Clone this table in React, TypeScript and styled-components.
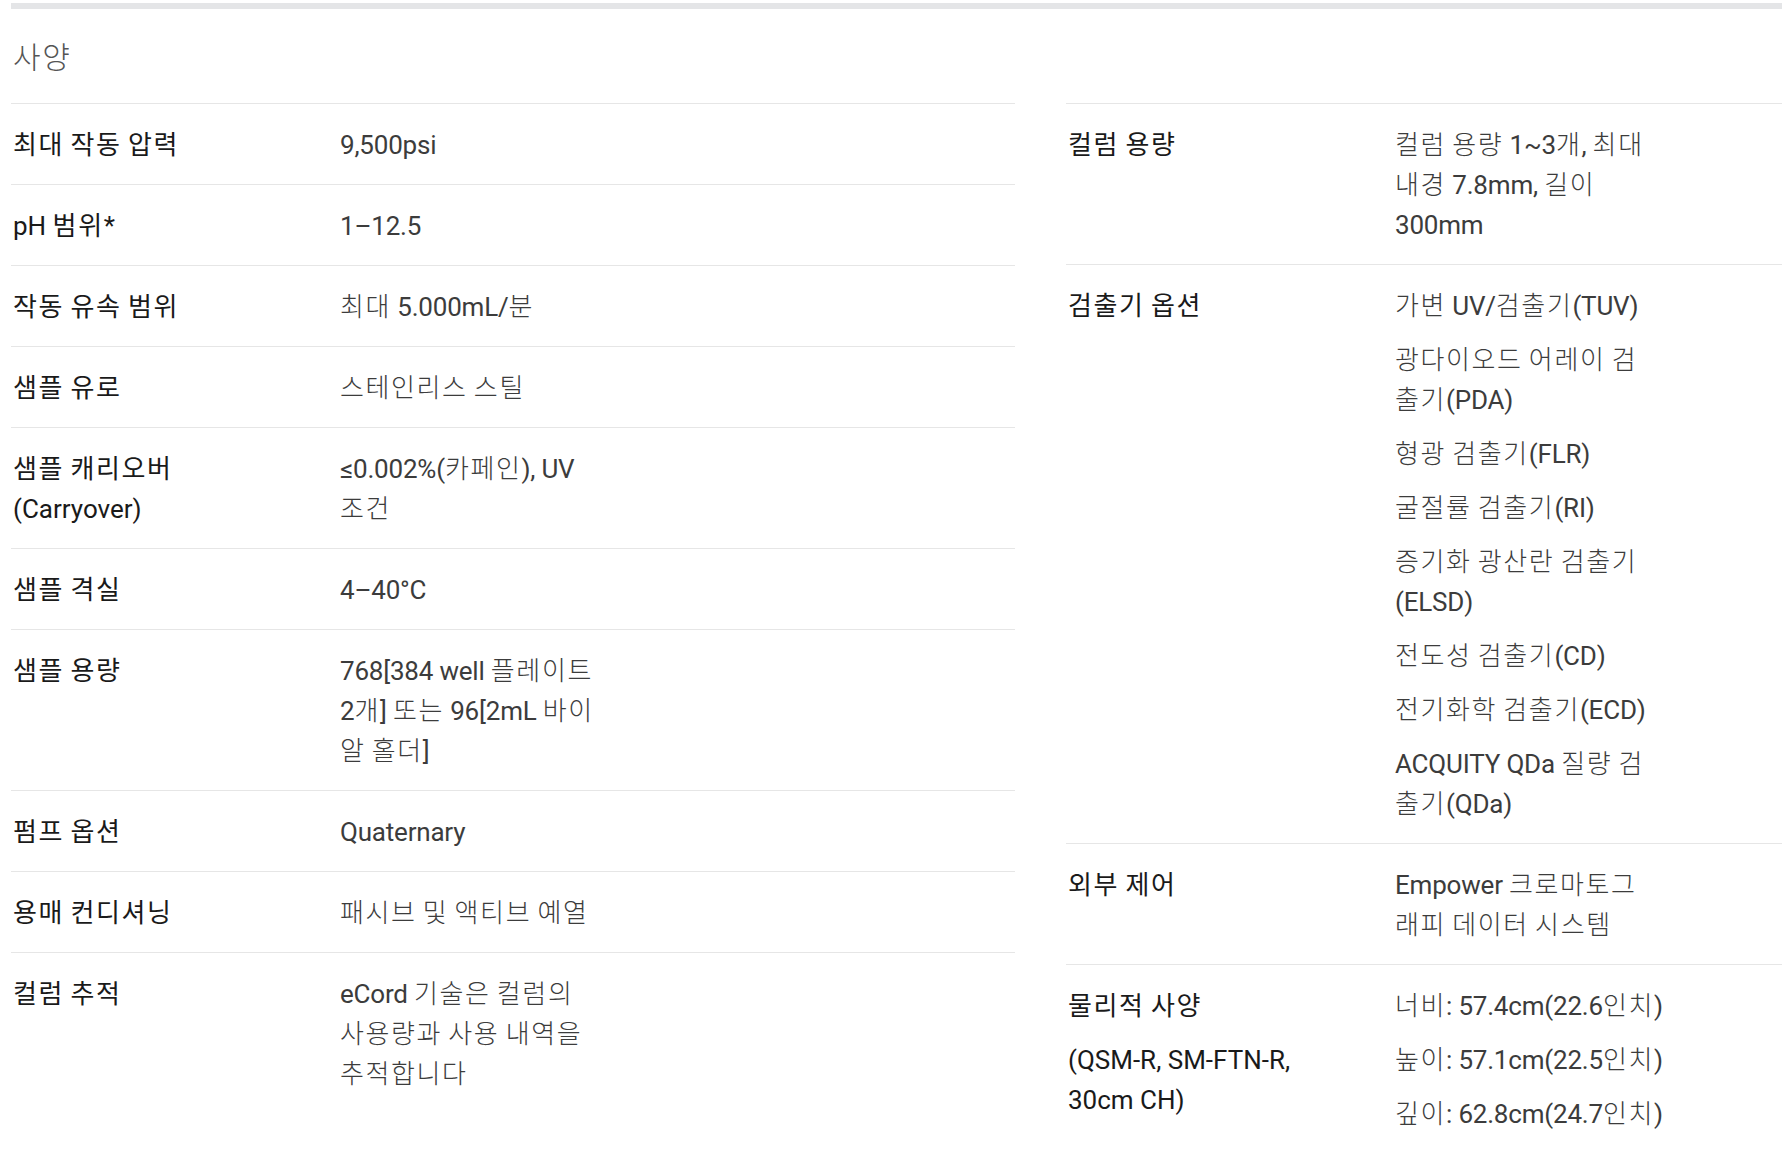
import React from 'react';
import styled, { createGlobalStyle } from 'styled-components';

const GlobalStyle = createGlobalStyle`
  html, body {
    margin: 0;
    padding: 0;
    background: #ffffff;
  }
  body {
    font-family: Roboto, "Noto Sans CJK KR", sans-serif;
    overflow-x: hidden;
  }
`;

const Page = styled.div`
  padding: 3px 0 40px 11px;
  overflow: hidden;
`;

const TopRule = styled.div`
  height: 6px;
  background: #e4e5e7;
`;

const Heading = styled.h2`
  margin: 29px 0 25px 2px;
  font-size: 30px;
  line-height: 40px;
  font-weight: 300;
  color: #555555;
`;

const Columns = styled.div`
  display: grid;
  grid-template-columns: 1004px 1004px;
  column-gap: 51px;
  align-items: start;
`;

const SpecList = styled.div`
  display: flex;
  flex-direction: column;
`;

const Row = styled.div`
  display: grid;
  grid-template-columns: 327px 1fr;
  padding: 21px 0 19px 2px;
  border-top: 1px solid #e6e6e6;
  font-size: 26px;
  line-height: 40px;
`;

const Label = styled.div`
  display: flex;
  flex-direction: column;
  gap: 14px;
  font-weight: 400;
  color: #1a1a1a;
`;

const Value = styled.div`
  display: flex;
  flex-direction: column;
  gap: 14px;
  font-weight: 400;
  color: #3c3c3c;
  letter-spacing: -0.2px;
`;

// lines break where the original page breaks them
const Line = styled.p`
  margin: 0;
  white-space: pre;
`;

// Korean runs: a little wider, like the original page's Korean face,
// and kept from stretching the Roboto line box
const Hangul = styled.span<{ $light?: boolean }>`
  font-family: "Noto Sans CJK KR", sans-serif;
  letter-spacing: 1.6px;
  line-height: 0;
  font-weight: ${(p) => (p.$light ? 300 : 400)};
`;

const HANGUL = /([\u1100-\u11FF\u3130-\u318F\uAC00-\uD7AF]+)/;

const Text = ({ children, light }: { children: string; light?: boolean }) => (
  <>
    {children.split(HANGUL).map((part, i) =>
      HANGUL.test(part) ? (
        <Hangul key={i} $light={light}>
          {part}
        </Hangul>
      ) : (
        part
      ),
    )}
  </>
);

type Spec = { label: string[]; value: string[] };

const leftSpecs: Spec[] = [
  { label: ['최대 작동 압력'], value: ['9,500psi'] },
  { label: ['pH 범위*'], value: ['1–12.5'] },
  { label: ['작동 유속 범위'], value: ['최대 5.000mL/분'] },
  { label: ['샘플 유로'], value: ['스테인리스 스틸'] },
  { label: ['샘플 캐리오버\n(Carryover)'], value: ['≤0.002%(카페인), UV\n조건'] },
  { label: ['샘플 격실'], value: ['4–40°C'] },
  { label: ['샘플 용량'], value: ['768[384 well 플레이트\n2개] 또는 96[2mL 바이\n알 홀더]'] },
  { label: ['펌프 옵션'], value: ['Quaternary'] },
  { label: ['용매 컨디셔닝'], value: ['패시브 및 액티브 예열'] },
  { label: ['컬럼 추적'], value: ['eCord 기술은 컬럼의\n사용량과 사용 내역을\n추적합니다'] },
];

const rightSpecs: Spec[] = [
  { label: ['컬럼 용량'], value: ['컬럼 용량 1~3개, 최대\n내경 7.8mm, 길이\n300mm'] },
  {
    label: ['검출기 옵션'],
    value: [
      '가변 UV/검출기(TUV)',
      '광다이오드 어레이 검\n출기(PDA)',
      '형광 검출기(FLR)',
      '굴절률 검출기(RI)',
      '증기화 광산란 검출기\n(ELSD)',
      '전도성 검출기(CD)',
      '전기화학 검출기(ECD)',
      'ACQUITY QDa 질량 검\n출기(QDa)',
    ],
  },
  { label: ['외부 제어'], value: ['Empower 크로마토그\n래피 데이터 시스템'] },
  {
    label: ['물리적 사양', '(QSM-R, SM-FTN-R,\n30cm CH)'],
    value: ['너비: 57.4cm(22.6인치)', '높이: 57.1cm(22.5인치)', '깊이: 62.8cm(24.7인치)'],
  },
];

const SpecColumn = ({ specs }: { specs: Spec[] }) => (
  <SpecList>
    {specs.map((spec) => (
      <Row key={spec.label[0]}>
        <Label>
          {spec.label.map((l) => (
            <Line key={l}>
              <Text>{l}</Text>
            </Line>
          ))}
        </Label>
        <Value>
          {spec.value.map((v) => (
            <Line key={v}>
              <Text light>{v}</Text>
            </Line>
          ))}
        </Value>
      </Row>
    ))}
  </SpecList>
);

const App = () => {
  return (
    <>
      <GlobalStyle />
      <Page>
        <TopRule />
        <Heading>
          <Text light>사양</Text>
        </Heading>
        <Columns>
          <SpecColumn specs={leftSpecs} />
          <SpecColumn specs={rightSpecs} />
        </Columns>
      </Page>
    </>
  );
};

export default App;
